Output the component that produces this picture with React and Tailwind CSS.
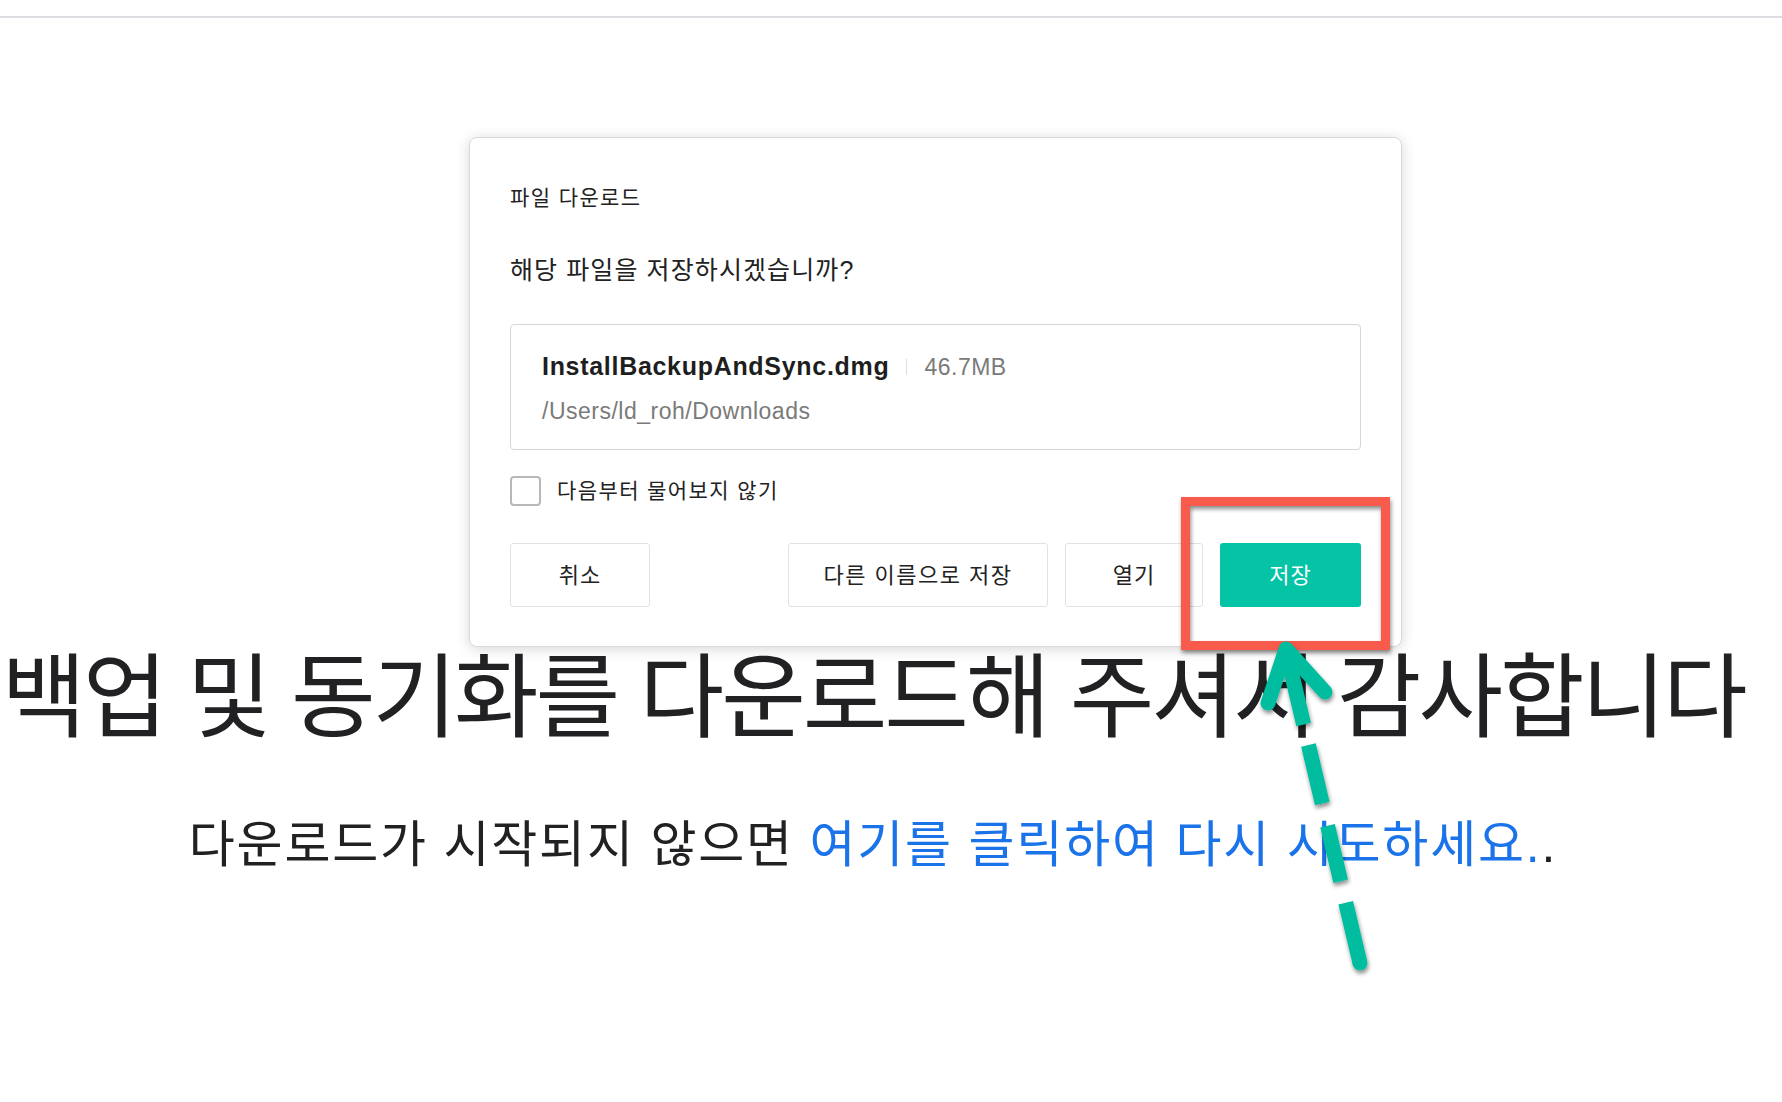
import React from "react";

export default function App() {
  return (
    <div className="relative w-[1782px] h-[1102px] bg-white overflow-hidden font-['Liberation_Sans','Noto_Sans_CJK_KR',sans-serif]">
      <div className="h-[16px]" />
      <div className="h-[2px] bg-[#dddce1]" />

      <div className="w-[1746px] text-center">
        <h1 className="mt-[634px] whitespace-nowrap text-[92px] leading-none tracking-[-3.1px] text-[#212124] font-normal">
          백업 및 동기화를 다운로드해 주셔서 감사합니다
        </h1>
        <p className="mt-[76px] whitespace-nowrap text-[50px] leading-none tracking-[1.8px] text-[#212124]">
          다운로드가 시작되지 않으면{" "}
          <span className="text-[#1a73e8]">여기를 클릭하여 다시 시도하세요.</span>.
        </p>
      </div>

      {/* Dialog overlay */}
      <div className="absolute left-[469px] top-[137px] w-[933px] h-[510px] bg-white rounded-[8px] border border-[#d9d9d9] shadow-[0_2px_14px_rgba(0,0,0,0.16)] px-[40px]">
        <div className="pt-[45px] text-[21px] leading-[30px] tracking-[1.4px] text-[#222]">파일 다운로드</div>
        <div className="mt-[39px] text-[25px] leading-[36px] tracking-[1.1px] text-[#222]">해당 파일을 저장하시겠습니까?</div>
        <div className="mt-[36px] h-[126px] border border-[#d6d6d6] rounded-[4px] pl-[31px] pt-[25px]">
          <div className="flex items-baseline leading-[32px]">
            <span className="text-[25px] font-bold tracking-[0.7px] text-[#1e1e1e]">InstallBackupAndSync.dmg</span>
            <span className="mx-[17px] w-px h-[16px] bg-[#dddddd] self-center" />
            <span className="text-[23px] tracking-[0.5px] text-[#7a7a7a]">46.7MB</span>
          </div>
          <div className="mt-[13px] text-[23px] leading-[30px] tracking-[0.5px] text-[#7a7a7a]">/Users/ld_roh/Downloads</div>
        </div>
        <div className="mt-[26px] flex items-center h-[30px]">
          <div className="w-[31px] h-[30px] border-2 border-[#b8b8b8] rounded-[4px] bg-white" />
          <span className="ml-[16px] text-[21px] leading-[30px] tracking-[1.4px] text-[#222]">다음부터 물어보지 않기</span>
        </div>
        <div className="mt-[37px] flex justify-between">
          <button className="w-[140px] h-[64px] border border-[#e2e2e2] rounded-[3px] bg-white text-[22px] tracking-[1px] text-[#222]">취소</button>
          <div className="flex gap-[17px]">
            <button className="w-[260px] h-[64px] border border-[#e2e2e2] rounded-[3px] bg-white text-[22px] tracking-[1.5px] text-[#222]">다른 이름으로 저장</button>
            <button className="w-[138px] h-[64px] border border-[#e2e2e2] rounded-[3px] bg-white text-[22px] tracking-[1px] text-[#222]">열기</button>
            <button className="w-[141px] h-[64px] rounded-[3px] bg-[#05c3a5] text-[22px] tracking-[1px] text-white">저장</button>
          </div>
        </div>
      </div>

      {/* Annotations */}
      <svg className="absolute left-0 top-0 pointer-events-none" width="1782" height="1102" viewBox="0 0 1782 1102">
        <defs>
          <filter id="sh" x="-20%" y="-20%" width="140%" height="140%">
            <feDropShadow dx="1" dy="3" stdDeviation="2" floodColor="#000" floodOpacity="0.45" />
          </filter>
        </defs>
        <rect x="1185.5" y="501.5" width="200" height="144" fill="none" stroke="#f85a4b" strokeWidth="9" filter="url(#sh)" />
        <g filter="url(#sh)" stroke="#05bd9f" strokeWidth="15" fill="none">
          <path d="M1360 963 L1286 650" strokeDasharray="62 22 57 23 60 21 90" strokeLinecap="butt" />
          <circle cx="1360" cy="963" r="7.5" fill="#05bd9f" stroke="none" />
          <polyline points="1268,703 1286,649 1325,692" strokeLinecap="round" strokeLinejoin="round" />
        </g>
      </svg>
    </div>
  );
}
